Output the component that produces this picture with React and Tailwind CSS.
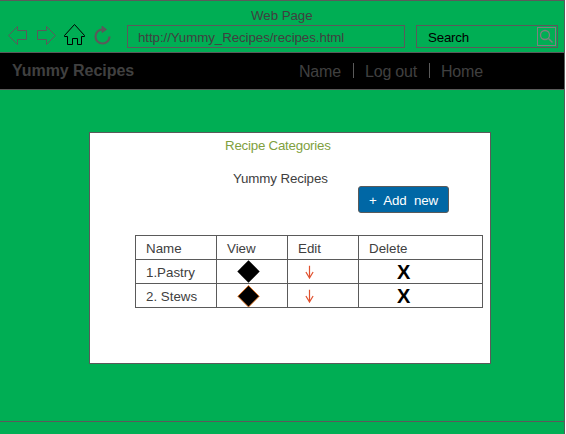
const rows = ['1.Pastry', '2. Stews'];

function NavigationIcons() {
  return (
    <svg width="127" height="51" viewBox="0 1 127 51" fill="none" className="shrink-0">
      <g stroke="#5a5a5a" strokeWidth="1">
        <path d="M8.5 35.5 17.5 26.5V30.5H26.5V39.5H17.5V44.5Z" />
        <path d="M55.5 35.5 46.5 26.5V30.5H37.5V39.5H46.5V44.5Z" />
      </g>
      <path d="M64.5 35.5 74.5 24.5 84.5 35.5V36.5H81.5V44.5H77.5V38.5H72.5V44.5H67.5V36.5H64.5Z" stroke="#000" />
      <path d="M102.5 29.5A7 7 0 1 0 109.5 36.5" stroke="#5a5a5a" strokeWidth="2.2" />
      <path d="M102 26.2 106.5 29.5 102 32.5Z" fill="#5a5a5a" stroke="#5a5a5a" />
    </svg>
  );
}

function BrowserBar() {
  return (
    <header className="flex h-[53px] border-y border-[#5a5a5a]">
      <NavigationIcons />
      <div className="flex w-[278px] flex-col">
        <div className="h-6 pl-[124px] pt-[7px] leading-4 tracking-[-0.05px]">Web Page</div>
        <div className="h-[23px] border border-[#5a5a5a] pl-[10px] pt-1 leading-4 tracking-[-0.08px]">
          http://Yummy_Recipes/recipes.html
        </div>
      </div>
      <div className="ml-[11px] mt-6 flex h-[23px] w-[142px] justify-between border border-[#5a5a5a] pl-[11px] pt-px">
        <span className="pt-[3px] leading-4 tracking-[-0.2px] text-black">Search</span>
        <svg width="20" height="19" viewBox="0 0 20 19" fill="none" stroke="#808080" className="shrink-0">
          <rect x=".5" y=".5" width="18" height="18" />
          <circle cx="8" cy="8" r="4.5" strokeWidth="1.3" />
          <path d="m11.5 11.5 4 4" strokeWidth="1.5" />
        </svg>
      </div>
    </header>
  );
}

function RecipeTable() {
  return (
    <div className="ml-[45px] mt-[22px] grid w-[348px] grid-cols-[81px_71px_71px_124px] grid-rows-[24px_24px_24px] border-l border-t border-[#5a5a5a] leading-4">
      {['Name', 'View', 'Edit', 'Delete'].map((title) => (
        <div key={title} className="border-b border-r border-[#5a5a5a] pl-[10px] pt-[5px]">{title}</div>
      ))}
      {rows.map((name, i) => (
        <div key={name} className="contents">
          <div className="border-b border-r border-[#5a5a5a] pl-[10px] pt-[5px]">{name}</div>
          <div className="border-b border-r border-[#5a5a5a] pl-5">
            <svg width="23" height="23" viewBox="0 0 23 23">
              {i === 0 ? (
                <path d="M.3 11.5 11.5 .2 22.7 11.5 11.5 22.8Z" fill="#000" />
              ) : (
                <path d="M.8 12.3 11.5 1.6 22.2 12.3 11.5 23Z" fill="#000" stroke="#f07a20" strokeWidth=".9" />
              )}
            </svg>
          </div>
          <div className="border-b border-r border-[#5a5a5a] pl-[17px] pt-[5px]">
            <svg width="10" height="14" viewBox="0 0 10 14" fill="none" stroke="#e0512e">
              <path d="M4.5 .7V12.5M.9 7 4.5 13 8.1 7" strokeWidth="1.2" />
            </svg>
          </div>
          <div className="border-b border-r border-[#5a5a5a] pl-[38px] pt-px text-[20px] font-bold leading-[22px] text-black">X</div>
        </div>
      ))}
    </div>
  );
}

export default function App() {
  return (
    <div className="h-[434px] w-[566px] overflow-hidden bg-white font-['Liberation_Sans',Arial,sans-serif] text-[13.33px] text-[#404040]">
      <div className="flex h-full w-[565px] flex-col border-r border-[#5a5a5a] bg-[#00ae54]">
        <BrowserBar />
        <nav className="flex h-[37px] shrink-0 border-b border-[#5a5a5a] bg-black text-base leading-5">
          <h1 className="w-[287px] pl-3 pt-2 font-bold tracking-[-0.05px]">Yummy Recipes</h1>
          <div className="flex pt-[9px]">
            <span className="w-[66px] pl-3 tracking-[-0.2px]">Name</span>
            <span className="mt-px h-[15px] border-l border-[#5a5a5a]" />
            <span className="w-[75px] pl-[11px] tracking-[-0.2px]">Log out</span>
            <span className="mt-px h-[15px] border-l border-[#5a5a5a]" />
            <span className="pl-[11px] tracking-[-0.2px]">Home</span>
          </div>
        </nav>
        <main className="h-[332px] shrink-0 border-b border-[#5a5a5a] pl-[89px] pt-[42px]">
          <section className="h-[232px] w-[402px] border border-[#5a5a5a] bg-white">
            <h2 className="pl-[135px] pt-[5px] leading-4 tracking-[-0.24px] text-[#7f9f40]">Recipe Categories</h2>
            <div className="flex h-[59px] pl-[143px]">
              <h3 className="w-[125px] pt-[17px] leading-4 tracking-[-0.12px]">Yummy Recipes</h3>
              <button className="mt-8 h-[27px] w-[91px] shrink-0 whitespace-pre rounded-[3px] border border-[#5a5a5a] bg-[#0067a5] pl-[10px] text-left leading-[27px] tracking-[-0.08px] text-white">{'+  Add  new'}</button>
            </div>
            <RecipeTable />
          </section>
        </main>
      </div>
    </div>
  );
}
